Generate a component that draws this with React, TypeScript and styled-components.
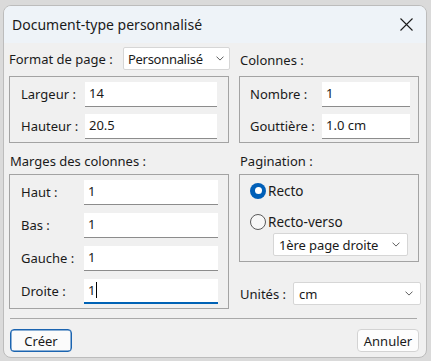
import React from "react";
import styled, { createGlobalStyle } from "styled-components";

const GlobalStyle = createGlobalStyle`
    html, body {
        margin: 0;
        padding: 0;
        background: #dadada;
    }
    * {
        box-sizing: border-box;
    }
`;

const Chevron: React.FC = () => (
    <svg width="8" height="5" viewBox="0 0 8 5" fill="none">
        <path d="M0.5 0.6 L4 4.1 L7.5 0.6" stroke="#5f5f5f" strokeWidth="1" />
    </svg>
);

const CloseIcon: React.FC = () => (
    <svg width="13" height="13" viewBox="0 0 13 13" fill="none">
        <path d="M0.5 0.5 L12.5 12.5 M12.5 0.5 L0.5 12.5" stroke="#1c1c1c" strokeWidth="1.1" />
    </svg>
);

interface FieldRowProps {
    label: string;
    value: string;
    focused?: boolean;
}

const FieldRow: React.FC<FieldRowProps> = ({ label, value, focused }) => (
    <Row>
        <RowLabel>{label}</RowLabel>
        <TextBox $focused={focused}>
            {value}
            {focused && <Caret />}
        </TextBox>
    </Row>
);

export default function App() {
    return (
        <Page>
            <GlobalStyle />
            <Dialog>
                <TitleBar>
                    <Title>Document-type personnalisé</Title>
                    <CloseButton>
                        <CloseIcon />
                    </CloseButton>
                </TitleBar>

                <Body>
                    <FormatRow>
                        <Label>Format de page :</Label>
                        <Select $width={107} $tight>
                            <span>Personnalisé</span>
                            <Chevron />
                        </Select>
                    </FormatRow>
                    <HeadLabel $align="center">Colonnes :</HeadLabel>

                    <GroupBox $labelWidth={64} $padLeft={11} $padRight={11}>
                        <FieldRow label="Largeur :" value="14" />
                        <FieldRow label="Hauteur :" value="20.5" />
                    </GroupBox>
                    <GroupBox $labelWidth={72} $padLeft={10} $padRight={8}>
                        <FieldRow label="Nombre :" value="1" />
                        <FieldRow label="Gouttière :" value="1.0 cm" />
                    </GroupBox>

                    <HeadLabel $align="end">Marges des colonnes :</HeadLabel>
                    <HeadLabel $align="end">Pagination :</HeadLabel>

                    <GroupBox $labelWidth={63} $padLeft={11} $padRight={10} $gap={8}>
                        <FieldRow label="Haut :" value="1" />
                        <FieldRow label="Bas :" value="1" />
                        <FieldRow label="Gauche :" value="1" />
                        <FieldRow label="Droite :" value="1" focused />
                    </GroupBox>

                    <RightStack>
                        <PaginationBox>
                            <RadioRow>
                                <Radio $checked />
                                <RadioLabel>Recto</RadioLabel>
                            </RadioRow>
                            <RadioRow>
                                <Radio />
                                <RadioLabel>Recto-verso</RadioLabel>
                            </RadioRow>
                            <SubSelectWrap>
                                <Select $width={135}>
                                    <span>1ère page droite</span>
                                    <Chevron />
                                </Select>
                            </SubSelectWrap>
                        </PaginationBox>
                        <UnitsRow>
                            <Label>Unités :</Label>
                            <Select $width={128}>
                                <span>cm</span>
                                <Chevron />
                            </Select>
                        </UnitsRow>
                    </RightStack>
                </Body>

                <Footer>
                    <Separator />
                    <ButtonRow>
                        <Button $primary>Créer</Button>
                        <Button>Annuler</Button>
                    </ButtonRow>
                </Footer>
            </Dialog>
        </Page>
    );
}

const Page = styled.div`
    width: 431px;
    height: 361px;
    padding: 5px 4px 3px 3px;
    font-family: "Noto Sans", "Open Sans", sans-serif;
    color: #1a1a1a;
`;

const Dialog = styled.div`
    width: 424px;
    height: 353px;
    border: 1px solid #bcbcbc;
    border-radius: 8px;
    overflow: hidden;
    background: #f0f0f0;
    display: flex;
    flex-direction: column;
`;

const TitleBar = styled.div`
    height: 37px;
    display: flex;
    align-items: center;
    justify-content: space-between;
    padding-left: 8px;
    background: #eef3f8;
`;

const Title = styled.div`
    font-size: 14px;
    line-height: 18px;
    margin-top: 1px;
`;

const CloseButton = styled.div`
    width: 39px;
    height: 37px;
    display: flex;
    align-items: center;
    justify-content: center;
`;

const Body = styled.div`
    display: grid;
    grid-template-columns: 220px 180px;
    grid-template-rows: 29px 67px 31px 135px;
    column-gap: 10px;
    padding: 4px 7px 0 5px;
`;

const Label = styled.span`
    font-size: 13px;
    line-height: 18px;
    white-space: nowrap;
`;

const FormatRow = styled.div`
    display: flex;
    align-items: flex-start;
    justify-content: space-between;
    padding-top: 3px;
    margin-right: -1px;
`;

const HeadLabel = styled.div<{ $align: "center" | "end" }>`
    font-size: 13px;
    line-height: 18px;
    padding-left: 1px;
    align-self: ${(p) => (p.$align === "center" ? "start" : "end")};
    margin-top: ${(p) => (p.$align === "center" ? "4px" : "0")};
    margin-bottom: ${(p) => (p.$align === "end" ? "4px" : "0")};
`;

const Select = styled.div<{ $width: number; $tight?: boolean }>`
    width: ${(p) => p.$width}px;
    height: 23px;
    background: #ffffff;
    border: 1px solid #d6d6d6;
    border-radius: 2px;
    display: flex;
    align-items: center;
    justify-content: space-between;
    gap: 3px;
    padding: 0 ${(p) => (p.$tight ? 5 : 7)}px 0 ${(p) => (p.$tight ? 4 : 5)}px;
    font-size: 13px;
    letter-spacing: ${(p) => (p.$tight ? "-0.3px" : "-0.1px")};
    white-space: nowrap;
    margin-top: -3px;
    & > svg {
        flex: none;
    }
`;

const GroupBox = styled.div<{
    $labelWidth: number;
    $padLeft: number;
    $padRight: number;
    $gap?: number;
}>`
    border: 1px solid #a3a3a3;
    display: grid;
    grid-template-columns: ${(p) => p.$labelWidth}px 1fr;
    align-content: start;
    row-gap: ${(p) => p.$gap ?? 7}px;
    padding: 5px ${(p) => p.$padRight}px 0 ${(p) => p.$padLeft}px;
`;

const Row = styled.div`
    display: contents;
`;

const RowLabel = styled.span`
    font-size: 13px;
    line-height: 25px;
    white-space: nowrap;
`;

const TextBox = styled.div<{ $focused?: boolean }>`
    height: 25px;
    background: #ffffff;
    border-bottom: ${(p) => (p.$focused ? "2px solid #0062b5" : "1px solid #8c8c8c")};
    padding: 0 4px;
    font-size: 13px;
    line-height: 22px;
    display: flex;
    align-items: flex-start;
`;

const Caret = styled.span`
    display: inline-block;
    width: 1px;
    height: 16px;
    margin-top: 3px;
    margin-left: 1px;
    background: #000;
`;

const RightStack = styled.div`
    display: flex;
    flex-direction: column;
`;

const PaginationBox = styled.div`
    height: 88px;
    border: 1px solid #a3a3a3;
    display: flex;
    flex-direction: column;
    padding: 6px 10px 0 10px;
`;

const RadioRow = styled.div`
    display: flex;
    align-items: center;
    height: 19px;
    margin-bottom: 12px;
    &:nth-child(2) {
        margin-bottom: 2px;
    }
`;

const Radio = styled.span<{ $checked?: boolean }>`
    width: 16px;
    height: 16px;
    border-radius: 50%;
    flex: none;
    background: ${(p) => (p.$checked ? "#005fb8" : "#f7f7f7")};
    border: ${(p) => (p.$checked ? "none" : "1px solid #5a5a5a")};
    display: flex;
    align-items: center;
    justify-content: center;
    &::after {
        content: "";
        display: ${(p) => (p.$checked ? "block" : "none")};
        width: 7px;
        height: 7px;
        border-radius: 50%;
        background: #ffffff;
    }
`;

const RadioLabel = styled.span`
    font-size: 13.5px;
    margin-left: 2px;
    line-height: 18px;
`;

const SubSelectWrap = styled.div`
    padding-left: 23px;
    margin-top: 3px;
`;

const UnitsRow = styled.div`
    display: flex;
    align-items: center;
    justify-content: space-between;
    margin-top: 20px;
    margin-right: -2px;
    padding-left: 1px;
    & > ${Select} {
        margin-top: 0;
    }
`;

const Footer = styled.div`
    padding: 9px 7px 0 6px;
`;

const Separator = styled.div`
    height: 1px;
    background: #a9a9a9;
    margin-right: 2px;
`;

const ButtonRow = styled.div`
    display: flex;
    justify-content: space-between;
    margin-top: 10px;
`;

const Button = styled.div<{ $primary?: boolean }>`
    width: 62px;
    height: 23px;
    border-radius: 4px;
    border: 1px solid ${(p) => (p.$primary ? "#1b64b0" : "#d3d3d3")};
    box-shadow: ${(p) => (p.$primary ? "inset 0 0 0 0.5px #1b64b0" : "none")};
    background: ${(p) => (p.$primary ? "#fbfbfb" : "#fdfdfd")};
    display: flex;
    align-items: center;
    justify-content: center;
    font-size: 13px;
`;
